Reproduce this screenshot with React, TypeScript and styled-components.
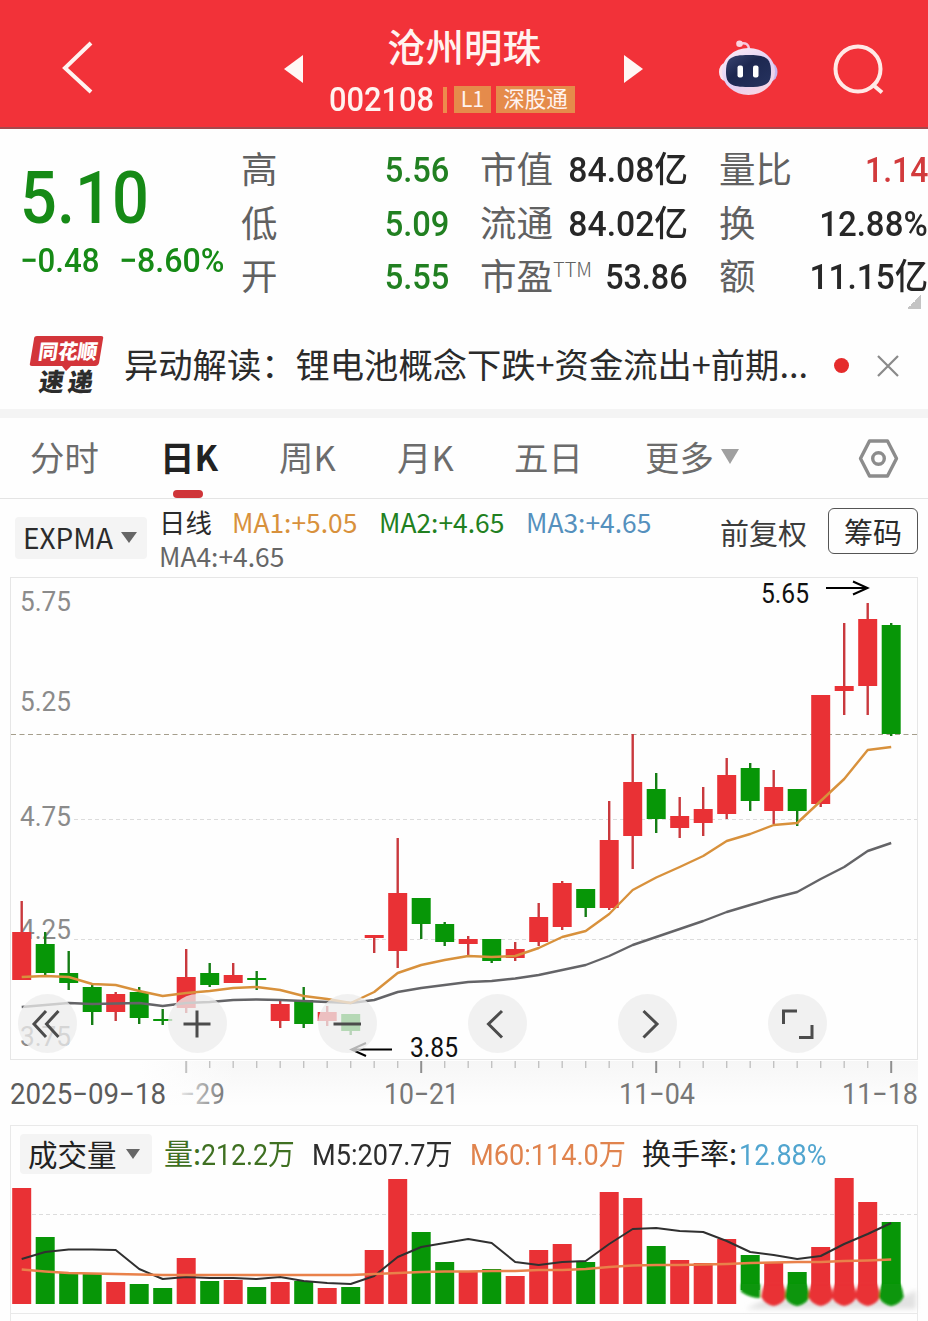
import React from 'react';
import styled, { createGlobalStyle } from 'styled-components';

const CJK = '"Noto Sans CJK SC", sans-serif';
const NUM = 'Roboto, "Noto Sans CJK SC", sans-serif';
const RED = '#e93135';
const GREEN = '#079607';

const Global = createGlobalStyle`
  * { box-sizing: border-box; }
  body { margin: 0; background: #fefefe; font-family: ${CJK}; color: #2b2b2b; }
  svg { display: block; flex: none; }
`;

const Page = styled.main`
  width: 928px;
  height: 1321px;
  overflow: hidden;
  background: #fefefe;
`;

/* text squeezed horizontally to a DIN-like proportion */
const Condensed = styled.span<{ $scale?: number; $origin?: string }>`
  display: inline-block;
  white-space: pre;
  font-family: ${NUM};
  transform: scaleX(${(p) => p.$scale ?? 0.92});
  transform-origin: ${(p) => p.$origin ?? 'left'} center;
`;

/* ---------- header ---------- */
const Header = styled.header`
  height: 129px;
  display: flex;
  align-items: flex-start;
  background: #f23239;
  border-bottom: 2px solid #a5484c;
  color: #fff3f0;
`;
const BackButton = styled.div`
  width: 284px;
  padding: 40px 0 0 61px;
`;
const Arrow = styled.div`
  width: 20px;
  padding-top: 55px;
`;
const TitleBlock = styled.div`
  width: 320px;
`;
const StockName = styled.div`
  margin-top: 17px;
  height: 56px;
  line-height: 56px;
  text-align: center;
  font-size: 38.4px;
  font-weight: 500;
`;
const CodeRow = styled.div`
  display: flex;
  align-items: center;
  height: 27px;
  margin-top: 13px;
  padding-left: 25px;
`;
const Code = styled.div`
  width: 114px;
  height: 34px;
  font-size: 33.5px;
  line-height: 27px;
  font-weight: 500;
`;
const Bar = styled.i`
  width: 4px;
  height: 26px;
  margin-right: 7px;
  background: #ee8a4c;
`;
const Badge = styled.span<{ $width: number }>`
  width: ${(p) => p.$width}px;
  height: 27px;
  line-height: 24px;
  margin-right: 5px;
  background: #e58b4b;
  text-align: center;
  font-size: 21.5px;
  white-space: nowrap;
`;
const Robot = styled.div`
  padding: 39px 0 0 75px;
`;
const SearchIcon = styled.div`
  padding: 43px 0 0 52px;
`;

/* ---------- quote ---------- */
const Quote = styled.section`
  display: flex;
  height: 193px;
  padding-top: 14px;
`;
const PriceBlock = styled.div`
  width: 241px;
  padding: 16px 0 0 20px;
  color: #168a16;
  font-weight: 500;
`;
const Price = styled.div`
  height: 64px;
  line-height: 64px;
  font-size: 73px;
`;
const Change = styled.div`
  display: flex;
  height: 36px;
  margin-top: 17px;
  line-height: 36px;
  font-size: 34px;
`;
const ChangeItem = styled.div<{ $width?: number }>`
  width: ${(p) => (p.$width ? p.$width + 'px' : 'auto')};
`;
const Stats = styled.dl<{ $width: number; $gap: number }>`
  width: ${(p) => p.$width}px;
  margin: 0 ${(p) => p.$gap}px 0 0;
`;
const Stat = styled.div`
  display: flex;
  justify-content: space-between;
  height: 53.5px;
  line-height: 49px;
  white-space: nowrap;
`;
const StatLabel = styled.dt`
  font-size: 36.5px;
  color: #616161;
  display: flex;
`;
const Sup = styled.span`
  font: 300 20px/37px ${CJK};
`;
const StatValue = styled.dd<{ $color?: string }>`
  margin: 0;
  padding-top: 1px;
  font: 500 35.5px/53px ${NUM};
  color: ${(p) => p.$color ?? '#272727'};
`;
const Corner = styled.i`
  align-self: flex-start;
  width: 14px;
  height: 14px;
  margin: 152px 0 0 -21px;
  background: linear-gradient(135deg, transparent 50%, #c4c4c4 50%);
`;

/* ---------- news ---------- */
const News = styled.section`
  display: flex;
  align-items: center;
  height: 87px;
  padding-left: 29px;
`;
const NewsText = styled.div`
  width: 690px;
  margin: -5px 20px 0;
  white-space: nowrap;
  font-size: 34.3px;
  line-height: 54px;
`;
const Dot = styled.i`
  flex: none;
  width: 15px;
  height: 15px;
  margin-right: 28px;
  border-radius: 50%;
  background: #e52c2c;
`;
const Divider = styled.div`
  height: 9px;
  background: #f4f4f4;
`;

/* ---------- tabs ---------- */
const Tabs = styled.nav`
  display: flex;
  height: 81px;
  padding-left: 30px;
  border-bottom: 1px solid #e4e4e4;
`;
const Tab = styled.div<{ $width: number; $active?: boolean }>`
  width: ${(p) => p.$width}px;
  display: flex;
  flex-direction: column;
  font-size: 34.4px;
  line-height: 50px;
  padding-top: 13px;
  white-space: nowrap;
  color: ${(p) => (p.$active ? '#222' : '#6c6c6c')};
  font-weight: ${(p) => (p.$active ? 700 : 400)};
`;
const TabLabel = styled.span`
  display: flex;
  align-items: center;
`;
const ActiveMark = styled.i`
  width: 30px;
  height: 8px;
  margin: 9px 0 0 13px;
  border-radius: 4px;
  background: #cf3539;
`;
const Caret = styled.i<{ $size: number; $height: number; $color: string; $gap: number }>`
  width: 0;
  height: 0;
  margin-left: ${(p) => p.$gap}px;
  border-left: ${(p) => p.$size}px solid transparent;
  border-right: ${(p) => p.$size}px solid transparent;
  border-top: ${(p) => p.$height}px solid ${(p) => p.$color};
`;
const Settings = styled.div`
  padding-top: 20px;
`;

/* ---------- indicator row ---------- */
const Indicators = styled.section`
  display: flex;
  height: 78px;
  padding-left: 15px;
`;
const Dropdown = styled.div<{ $width: number; $height: number; $size: number }>`
  width: ${(p) => p.$width}px;
  height: ${(p) => p.$height}px;
  line-height: ${(p) => p.$height - 3}px;
  display: flex;
  align-items: center;
  padding: 0 0 1px 8px;
  border-radius: 4px;
  background: #f4f4f4;
  font-size: ${(p) => p.$size}px;
  white-space: nowrap;
`;
const DropdownSlot = styled.div`
  width: 144px;
  padding-top: 18px;
`;
const MaList = styled.div`
  width: 561px;
  padding-top: 6px;
`;
const MaRow = styled.div`
  display: flex;
  height: 34px;
  line-height: 34px;
`;
const Ma = styled.span<{ $color: string; $width: number }>`
  width: ${(p) => p.$width}px;
  color: ${(p) => p.$color};
  font-size: 26.4px;
  white-space: nowrap;
`;
const Adjust = styled.div`
  width: 108px;
  padding-top: 7px;
  font-size: 29px;
  line-height: 52px;
  color: #3c3c3c;
  white-space: nowrap;
`;
const ChipButton = styled.div`
  width: 90px;
  height: 46px;
  margin-top: 9px;
  border: 1.5px solid #555;
  border-radius: 6px;
  text-align: center;
  font-size: 29px;
  line-height: 44px;
`;

/* ---------- charts ---------- */
const KChart = styled.section`
  position: relative;
  height: 548px;
`;
const Controls = styled.div`
  position: absolute;
  left: 18px;
  top: 417px;
  display: flex;
  gap: 91px;
`;
const RoundButton = styled.div`
  width: 59px;
  height: 59px;
  border-radius: 50%;
  background: rgba(237, 237, 237, 0.76);
`;
const Volume = styled.section`
  height: 196px;
`;
const VolumeHead = styled.div`
  display: flex;
  align-items: flex-start;
  height: 50px;
  margin: 0 10px;
  padding: 8px 0 0 9px;
  border: 1px solid #e9e9e9;
  border-bottom: 0;
`;
const VolumeItem = styled.div<{ $width: number; $color: string }>`
  width: ${(p) => p.$width}px;
  color: ${(p) => p.$color};
  font-size: 29px;
  line-height: 37px;
  white-space: nowrap;
`;

const X0 = 21.7;
const STEP = 23.5;
const cx = (i: number) => X0 + i * STEP;

type Candle = [up: 0 | 1, top: number, bottom: number, high: number, low: number, volumeTop: number];
const candles: Candle[] = [
  [1, 932, 980, 901, 980, 1188], [0, 944, 973, 932, 975, 1237], [0, 973, 983, 951, 990, 1273],
  [0, 987, 1012, 984, 1025, 1274], [1, 994, 1012, 992, 1021, 1282], [0, 992, 1018, 987, 1024, 1284],
  [0, 1019, 1021, 1009, 1025, 1288], [1, 977, 1008, 949, 1013, 1258], [0, 973, 985, 963, 987, 1281],
  [1, 975, 983, 963, 983, 1280], [0, 978, 980, 971, 990, 1287], [1, 1004, 1021, 1001, 1028, 1282],
  [0, 1000, 1024, 987, 1028, 1281], [1, 1012, 1021, 1006, 1026, 1288], [0, 1014, 1031, 1014, 1035, 1287],
  [1, 935, 938, 935, 953, 1250], [1, 893, 951, 838, 968, 1179], [0, 898, 924, 898, 939, 1232],
  [0, 924, 942, 922, 946, 1262], [1, 939, 944, 936, 956, 1271], [0, 939, 961, 939, 963, 1269],
  [1, 949, 958, 942, 961, 1276], [1, 917, 942, 903, 946, 1250], [1, 883, 927, 881, 930, 1244],
  [0, 889, 908, 889, 917, 1262], [1, 840, 908, 801, 910, 1192], [1, 782, 836, 734, 869, 1198],
  [0, 789, 819, 773, 833, 1246], [1, 816, 828, 797, 838, 1260], [1, 809, 823, 787, 836, 1263],
  [1, 775, 814, 758, 819, 1239], [0, 768, 801, 763, 811, 1255], [1, 787, 811, 770, 824, 1263],
  [0, 789, 811, 789, 826, 1272], [1, 695, 804, 695, 807, 1247], [1, 686, 691, 623, 715, 1178],
  [1, 619, 686, 603, 715, 1202], [0, 625, 734, 623, 736, 1222],
];
const fastLine = [977, 976, 977, 984, 985, 991, 996, 993, 991, 988, 987, 990, 996, 999, 1003, 992, 973, 965, 960, 956, 957, 956, 948, 937, 931, 914, 890, 877.5, 867, 856, 841, 834, 825, 823, 801, 779, 750, 747];
const slowLine = [1007, 1005, 1003, 1004, 1003.5, 1003, 1006, 1003, 1002, 1000, 999.5, 1000, 1001, 1002, 1003, 1000, 992, 988, 985, 982, 981, 978.5, 975, 970, 965, 956, 945, 937, 929, 921, 912, 905, 898, 892, 879, 867, 851, 843];
const m5 = [1259, 1252, 1249.5, 1249.5, 1250, 1269, 1279, 1277, 1278, 1278, 1279, 1277, 1281, 1283, 1284, 1276, 1257, 1247, 1243, 1239, 1243, 1262, 1265, 1262, 1261, 1244, 1229, 1228, 1231, 1232, 1241, 1252, 1255, 1259, 1256, 1244, 1234, 1223];
const m60 = [1269.5, 1271.5, 1273, 1273.5, 1274, 1274.5, 1275, 1275, 1275, 1275, 1275, 1275, 1275, 1275, 1275, 1274, 1273, 1272, 1271.5, 1271.5, 1271, 1271, 1270, 1270, 1269, 1267, 1265.5, 1265, 1265, 1264.5, 1264, 1263, 1262.5, 1262, 1262, 1261, 1260.5, 1259.5];
const points = (ys: number[]) => ys.map((y, i) => `${cx(i)},${y}`).join(' ');

const Line = styled.polyline<{ $color: string; $width?: number }>`
  fill: none;
  stroke: ${(p) => p.$color};
  stroke-width: ${(p) => p.$width ?? 2.4};
  stroke-linejoin: round;
`;
const AxisText = styled.text<{ $color?: string; $size?: number }>`
  font-family: ${NUM};
  font-size: ${(p) => p.$size ?? 28}px;
  fill: ${(p) => p.$color ?? '#8b8b8b'};
`;

const CandleChart = () => (
  <svg width="928" height="548" viewBox="0 577 928 548">
    <defs>
      <linearGradient id="axisShade" x1="0" y1="0" x2="0" y2="1">
        <stop offset="0" stopColor="#f6f6f6" />
        <stop offset="1" stopColor="#fefefe" />
      </linearGradient>
      <linearGradient id="axisEdge" x1="0" y1="0" x2="1" y2="0">
        <stop offset="0" stopColor="#fefefe" />
        <stop offset="1" stopColor="#fefefe" stopOpacity="0" />
      </linearGradient>
      <linearGradient id="dateFade" x1="0" y1="0" x2="1" y2="0">
        <stop offset="0" stopColor="#777" stopOpacity="0.15" />
        <stop offset="1" stopColor="#777" />
      </linearGradient>
    </defs>
    <rect x="140" y="1061" width="778" height="45" fill="url(#axisShade)" />
    <rect x="139" y="1061" width="100" height="46" fill="url(#axisEdge)" />
    <rect x="10.5" y="577.5" width="907" height="482" fill="none" stroke="#e6e6e6" />
    {[819.5, 939.5].map((y) => (
      <path key={y} d={`M74 ${y}H917`} stroke="#dcdcdc" strokeDasharray="4 3" />
    ))}
    {[[611, '5.75'], [711, '5.25'], [825.5, '4.75'], [938.5, '4.25'], [1045.5, '3.75']].map(([y, t]) => (
      <AxisText key={t} x="20" y={y} textLength="51" lengthAdjust="spacingAndGlyphs">{t}</AxisText>
    ))}
    <path d="M11 734.5H917" stroke="#a59e8c" strokeDasharray="5 3.5" />
    {candles.map(([up, top, bottom, high, low], i) => (
      <g key={i} fill={up ? RED : GREEN}>
        <rect x={cx(i) - 1.2} y={high} width="2.4" height={low - high} fill={up ? '#c9393d' : '#147d14'} />
        <rect x={cx(i) - 9.5} y={top} width="19" height={bottom - top} />
      </g>
    ))}
    <Line $color="#646467" points={points(slowLine)} />
    <Line $color="#d8913c" points={points(fastLine)} />
    <g fill="none" stroke="#000" strokeWidth="2">
      <path d="M826 588h41M853 581.5l14.500 6.500l-14.500 6.500" />
      <path d="M392 1049.500h-39M366 1043l-14.500 6.500l14.500 6.500" />
    </g>
    <AxisText x="761" y="603" $color="#111" $size={27} textLength="48" lengthAdjust="spacingAndGlyphs">5.65</AxisText>
    <AxisText x="410" y="1057" $color="#111" $size={27} textLength="48" lengthAdjust="spacingAndGlyphs">3.85</AxisText>
    {candles.map((_, i) => i >= 7 && (
      <path key={i} d={`M${cx(i)} 1061V${i % 10 === 7 ? 1073 : 1068}`} stroke={i % 10 === 7 && i > 7 ? '#8f8f8f' : '#c2c2c2'} strokeWidth={i % 10 === 7 ? 2 : 1.4} />
    ))}
    <AxisText x="10" y="1103.500" $color="#5c5c5c" $size={29} textLength="156" lengthAdjust="spacingAndGlyphs">2025−09−18</AxisText>
    <AxisText x="180" y="1103.500" $size={29} textLength="45" lengthAdjust="spacingAndGlyphs" $color="url(#dateFade)">−29</AxisText>
    <AxisText x="384" y="1103.500" $color="#777" $size={29} textLength="75" lengthAdjust="spacingAndGlyphs">10−21</AxisText>
    <AxisText x="619" y="1103.500" $color="#777" $size={29} textLength="76" lengthAdjust="spacingAndGlyphs">11−04</AxisText>
    <AxisText x="842" y="1103.500" $color="#777" $size={29} textLength="76" lengthAdjust="spacingAndGlyphs">11−18</AxisText>
  </svg>
);

const VolumeChart = () => (
  <svg width="928" height="146" viewBox="0 1175 928 146">
    <defs>
      <filter id="soft" x="-20%" y="-40%" width="140%" height="180%"><feGaussianBlur stdDeviation="1.3" /></filter>
      <filter id="haze" x="-10%" y="-60%" width="120%" height="220%"><feGaussianBlur stdDeviation="2.500" /></filter>
    </defs>
    <path d="M10.5 1175V1321M917.5 1175V1321M10 1313.5H918" stroke="#e9e9e9" fill="none" />
    <path d="M32 1214.500H917" stroke="#dcdcdc" strokeDasharray="4 3" />
    <path d="M746 1309L768 1298L905 1296L916 1290V1309Z" fill="#e2e2e2" filter="url(#haze)" />
    {candles.map(([up, , , , , top], i) => (
      <rect key={i} x={cx(i) - 9.5} y={top} width="19" height={(i > 30 ? 1290 : 1304) - top} fill={up ? RED : GREEN} />
    ))}
    <g filter="url(#soft)">
      {candles.map(([up], i) => i > 30 && (
        <path key={i}
          d={i === 31
            ? `M${cx(i) - 9} 1284h19v14q-10 0-19-6z`
            : `M${cx(i) - 9} 1284H${cx(i) + 9}Q${cx(i) + 12} 1290 ${cx(i) + 12.5} 1297Q${cx(i) + 8} 1305 ${cx(i)} 1306Q${cx(i) - 8} 1305 ${cx(i) - 12.5} 1297Q${cx(i) - 12} 1290 ${cx(i) - 9} 1284Z`}
          fill={up ? RED : GREEN} />
      ))}
    </g>
    <Line $color="#303030" $width={2} points={points(m5)} />
    <Line $color="#e9814a" $width={2.4} points={points(m60)} />
  </svg>
);

const controlIcons = [
  'M28 17L16 30L28 43M40.500 17L28.500 30L40.500 43',
  'M15.500 30H42.500M29 16.500V43.500',
  'M15.500 30H43',
  'M34 17L20.500 30L34 43.500',
  'M25.500 17L39 30L25.500 43.500',
  'M15.500 30V17H29M31 43.500H44V31',
];

export default function App() {
  return (
    <Page>
      <Global />
      <Header>
        <BackButton>
          <svg width="34" height="56" fill="none" stroke="#fff3f0" strokeWidth="4"><path d="M30 3L4 28L30 52" /></svg>
        </BackButton>
        <Arrow><svg width="20" height="30"><path d="M19 0V28L0 14Z" fill="#fff7f5" /></svg></Arrow>
        <TitleBlock>
          <StockName>沧州明珠</StockName>
          <CodeRow>
            <Code><Condensed>002108</Condensed></Code>
            <Bar />
            <Badge $width={37}>L1</Badge>
            <Badge $width={79}>深股通</Badge>
          </CodeRow>
        </TitleBlock>
        <Arrow><svg width="20" height="30"><path d="M0 0V28L19 14Z" fill="#fff7f5" /></svg></Arrow>
        <Robot>
          <svg width="60" height="58" viewBox="0 0 60 58">
            <defs>
              <linearGradient id="shell" x1="0" y1="0" x2="0.6" y2="1">
                <stop offset="0" stopColor="#fff0f6" /><stop offset="0.6" stopColor="#e0cff5" /><stop offset="1" stopColor="#f6d5e4" />
              </linearGradient>
              <linearGradient id="visor" x1="0" y1="0" x2="1" y2="1">
                <stop offset="0" stopColor="#3a4572" /><stop offset="0.4" stopColor="#1d2750" /><stop offset="1" stopColor="#26335f" />
              </linearGradient>
            </defs>
            <path d="M20 5Q30 2 30 11" fill="none" stroke="#f6c8dc" strokeWidth="2.500" />
            <circle cx="20.500" cy="4.700" r="3.300" fill="#fbd5e0" />
            <ellipse cx="6" cy="33" rx="6" ry="9" fill="#fae3ee" />
            <ellipse cx="52.500" cy="33" rx="6" ry="9" fill="#c7b5ee" />
            <ellipse cx="29.500" cy="32.500" rx="26.500" ry="23.500" fill="url(#shell)" />
            <path d="M7 33C7 19 12 16 29.500 16S52 19 52 33C52 45 47 48 29.500 48S7 45 7 33Z" fill="url(#visor)" />
            <rect x="18.500" y="26.500" width="5.500" height="12" rx="2" fill="#fff" />
            <rect x="34" y="26.500" width="5.500" height="12" rx="2" fill="#fff" />
          </svg>
        </Robot>
        <SearchIcon>
          <svg width="54" height="54" fill="none" stroke="#ffe9e6" strokeWidth="4"><circle cx="27" cy="26" r="22.500" /><path d="M41 41L51 49.500" /></svg>
        </SearchIcon>
      </Header>

      <Quote>
        <PriceBlock>
          <Price><Condensed $scale={0.89}>5.10</Condensed></Price>
          <Change>
            <ChangeItem $width={99}><Condensed>−0.48</Condensed></ChangeItem>
            <ChangeItem><Condensed $scale={0.945}>−8.60%</Condensed></ChangeItem>
          </Change>
        </PriceBlock>
        <Stats $width={208} $gap={31}>
          {[['高', '5.56'], ['低', '5.09'], ['开', '5.55']].map(([label, value]) => (
            <Stat key={label}>
              <StatLabel>{label}</StatLabel>
              <StatValue $color="#218021"><Condensed $origin="right">{value}</Condensed></StatValue>
            </Stat>
          ))}
        </Stats>
        <Stats $width={208} $gap={31}>
          <Stat><StatLabel>市值</StatLabel><StatValue><Condensed $scale={0.95} $origin="right">84.08亿</Condensed></StatValue></Stat>
          <Stat><StatLabel>流通</StatLabel><StatValue><Condensed $scale={0.95} $origin="right">84.02亿</Condensed></StatValue></Stat>
          <Stat><StatLabel>市盈<Sup>TTM</Sup></StatLabel><StatValue><Condensed $scale={0.91} $origin="right">53.86</Condensed></StatValue></Stat>
        </Stats>
        <Stats $width={209} $gap={0}>
          <Stat><StatLabel>量比</StatLabel><StatValue $color="#d23a3c"><Condensed $scale={0.9} $origin="right">1.14</Condensed></StatValue></Stat>
          <Stat><StatLabel>换</StatLabel><StatValue><Condensed $scale={0.93} $origin="right">12.88%</Condensed></StatValue></Stat>
          <Stat><StatLabel>额</StatLabel><StatValue><Condensed $scale={0.94} $origin="right">11.15亿</Condensed></StatValue></Stat>
        </Stats>
        <Corner />
      </Quote>

      <News>
        <svg width="75" height="66" viewBox="0 -1 75 66">
          <path d="M8 2H72Q75 2 74 5L70 29Q69 32 66 32H42L37 37L33 32H3Q0 32 1 29L5 5Q5 2 8 2Z" fill="#d3353a" />
          <g transform="skewX(-8)" fontFamily={CJK} fontWeight="900">
            <text x="12" y="25" fontSize="20.500" textLength="59" lengthAdjust="spacingAndGlyphs" fill="#fff">同花顺</text>
            <text x="17" y="57" fontSize="25" textLength="54" lengthAdjust="spacing" fill="#2c2c2c">速递</text>
          </g>
        </svg>
        <NewsText>异动解读：锂电池概念下跌+资金流出+前期...</NewsText>
        <Dot />
        <svg width="22" height="22" stroke="#8a8a8a" strokeWidth="2.200"><path d="M1 1L21 21M21 1L1 21" /></svg>
      </News>
      <Divider />

      <Tabs>
        <Tab $width={130}>分时</Tab>
        <Tab $width={119} $active><TabLabel>日K</TabLabel><ActiveMark /></Tab>
        <Tab $width={118}>周K</Tab>
        <Tab $width={117}>月K</Tab>
        <Tab $width={131}>五日</Tab>
        <Tab $width={213}><TabLabel>更多<Caret $size={9.5} $height={15} $color="#a0a0a0" $gap={7} /></TabLabel></Tab>
        <Settings>
          <svg width="42" height="42" fill="none" stroke="#8c8c8c" strokeWidth="3.400" strokeLinejoin="round">
            <path d="M11.500 3H29.500L38.500 20.500L29.500 38H11.500L2.500 20.500Z" /><circle cx="20.500" cy="20.500" r="5.800" />
          </svg>
        </Settings>
      </Tabs>

      <Indicators>
        <DropdownSlot>
          <Dropdown $width={132} $height={42} $size={28}>EXPMA<Caret $size={8} $height={11} $color="#666" $gap={8} /></Dropdown>
        </DropdownSlot>
        <MaList>
          <MaRow>
            <Ma $width={73} $color="#2b2b2b">日线</Ma>
            <Ma $width={147} $color="#d8913c">MA1:+5.05</Ma>
            <Ma $width={147} $color="#218021">MA2:+4.65</Ma>
            <Ma $width={140} $color="#5590bd">MA3:+4.65</Ma>
          </MaRow>
          <MaRow><Ma $width={140} $color="#666">MA4:+4.65</Ma></MaRow>
        </MaList>
        <Adjust>前复权</Adjust>
        <ChipButton>筹码</ChipButton>
      </Indicators>

      <KChart>
        <CandleChart />
        <Controls>
          {controlIcons.map((d) => (
            <RoundButton key={d}>
              <svg width="59" height="59" fill="none" stroke="#4c4c4c" strokeWidth="3"><path d={d} /></svg>
            </RoundButton>
          ))}
        </Controls>
      </KChart>

      <Volume>
        <VolumeHead>
          <VolumeItem $width={144} $color="#222">
            <Dropdown $width={132} $height={40} $size={29.5}>成交量<Caret $size={7.5} $height={10} $color="#666" $gap={9} /></Dropdown>
          </VolumeItem>
          <VolumeItem $width={148} $color="#3f7022">量:<Condensed>212.2万</Condensed></VolumeItem>
          <VolumeItem $width={158} $color="#2d2d2d"><Condensed $scale={0.935}>M5:207.7万</Condensed></VolumeItem>
          <VolumeItem $width={172} $color="#e0834d"><Condensed $scale={0.935}>M60:114.0万</Condensed></VolumeItem>
          <VolumeItem $width={97} $color="#222">换手率:</VolumeItem>
          <VolumeItem $width={100} $color="#51a5cf"><Condensed $scale={0.93}>12.88%</Condensed></VolumeItem>
        </VolumeHead>
        <VolumeChart />
      </Volume>
    </Page>
  );
}
